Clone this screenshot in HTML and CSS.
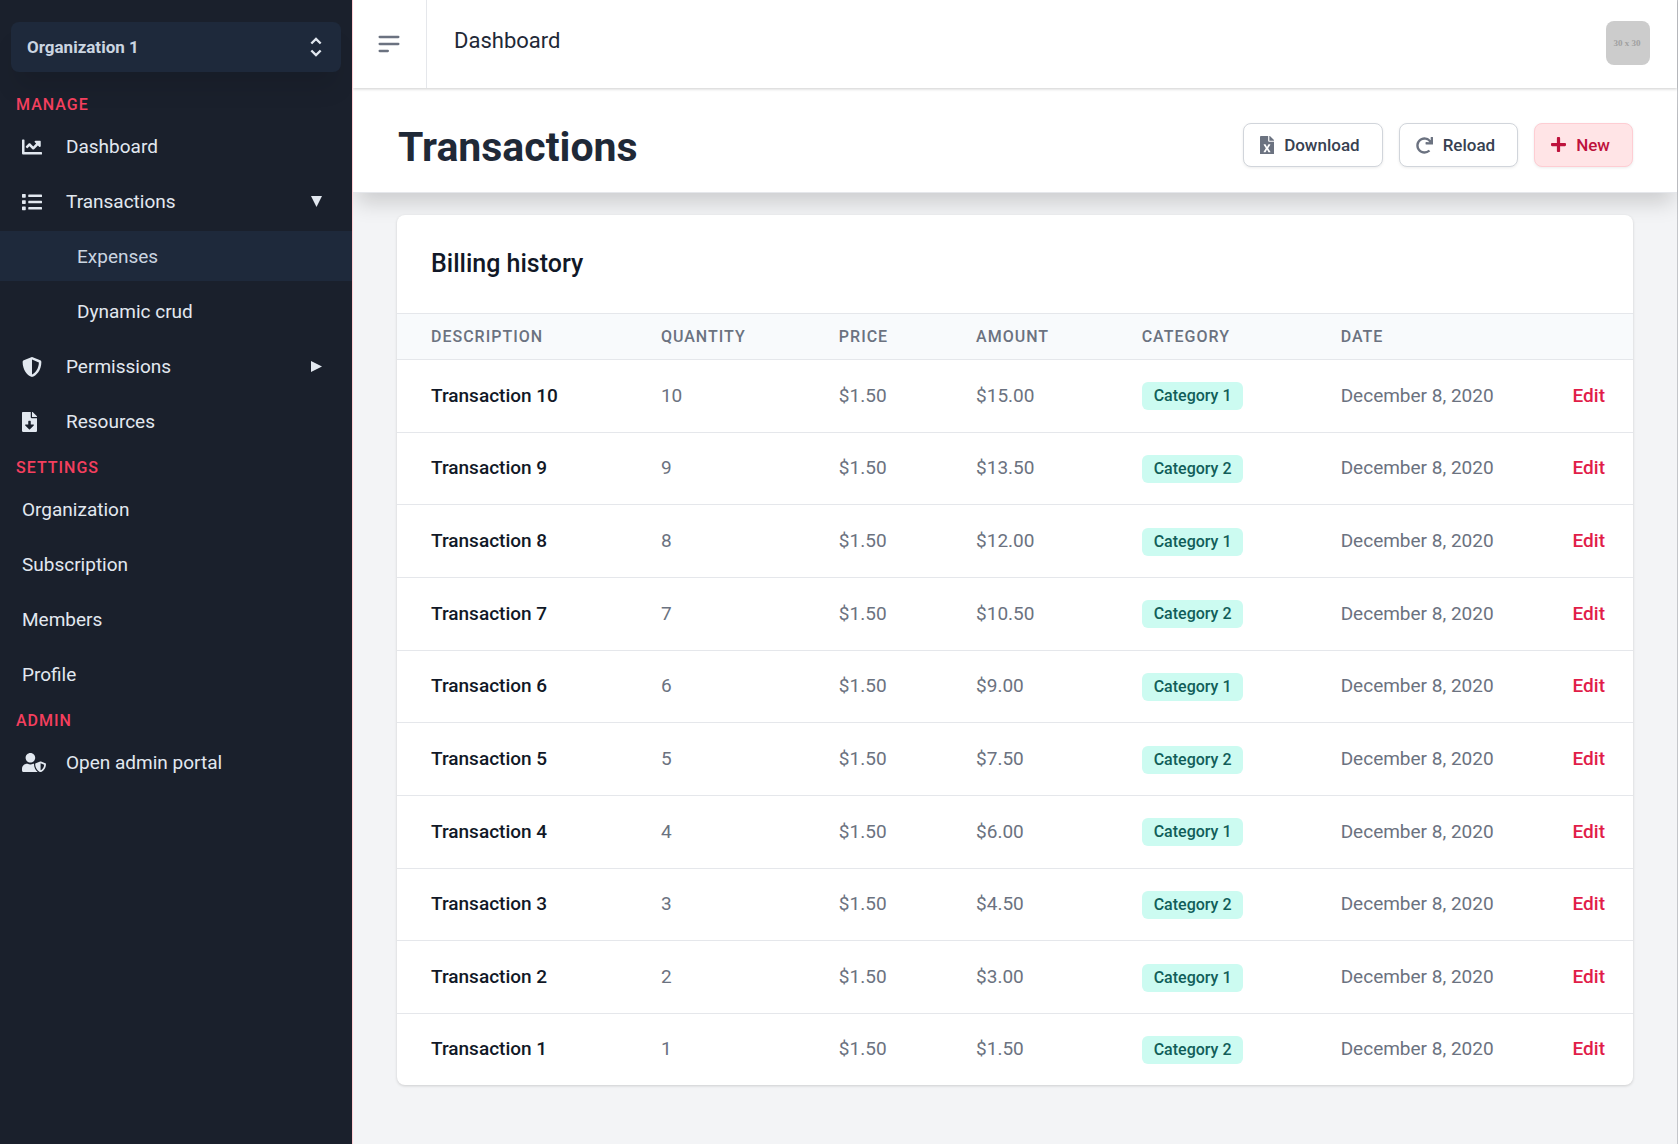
FILE: index.html
```html
<!DOCTYPE html>
<html lang="en">
<head>
<meta charset="utf-8">
<meta name="viewport" content="width=device-width, initial-scale=1">
<title>Transactions</title>
<link rel="stylesheet" href="styles.css">
</head>
<body>
<div class="app">
  <aside class="sidebar">
    <button class="org-switch" type="button">
      <span>Organization 1</span>
      <svg class="icon-selector" viewBox="0 0 24 24" aria-hidden="true"><path d="M8 9l4-4 4 4m0 6l-4 4-4-4"/></svg>
    </button>
    <nav>
      <h2 class="nav-heading">Manage</h2>
      <ul class="nav-list">
        <li><a class="nav-link" href="#">
          <span class="nav-icon"><svg class="w20" viewBox="0 0 512 512" aria-hidden="true"><path d="M496 384H64V80c0-8.84-7.16-16-16-16H16C7.16 64 0 71.16 0 80v336c0 17.67 14.33 32 32 32h464c8.84 0 16-7.16 16-16v-32c0-8.84-7.16-16-16-16zM464 96H345.94c-21.38 0-32.09 25.85-16.97 40.97l32.4 32.4L288 242.75l-73.37-73.37c-12.5-12.5-32.76-12.5-45.25 0l-68.69 68.69c-6.25 6.25-6.25 16.38 0 22.63l22.62 22.62c6.25 6.25 16.38 6.25 22.63 0L192 237.25l73.37 73.37c12.5 12.5 32.76 12.5 45.25 0l96-96 32.4 32.4c15.12 15.12 40.97 4.41 40.97-16.97V112c.01-8.84-7.15-16-15.99-16z"/></svg></span>
          <span>Dashboard</span></a></li>
        <li><a class="nav-link" href="#">
          <span class="nav-icon"><svg class="w20" viewBox="0 0 512 512" aria-hidden="true"><path d="M80 368H16a16 16 0 0 0-16 16v64a16 16 0 0 0 16 16h64a16 16 0 0 0 16-16v-64a16 16 0 0 0-16-16zm0-320H16A16 16 0 0 0 0 64v64a16 16 0 0 0 16 16h64a16 16 0 0 0 16-16V64a16 16 0 0 0-16-16zm0 160H16a16 16 0 0 0-16 16v64a16 16 0 0 0 16 16h64a16 16 0 0 0 16-16v-64a16 16 0 0 0-16-16zm416 176H176a16 16 0 0 0-16 16v32a16 16 0 0 0 16 16h320a16 16 0 0 0 16-16v-32a16 16 0 0 0-16-16zm0-320H176a16 16 0 0 0-16 16v32a16 16 0 0 0 16 16h320a16 16 0 0 0 16-16V80a16 16 0 0 0-16-16zm0 160H176a16 16 0 0 0-16 16v32a16 16 0 0 0 16 16h320a16 16 0 0 0 16-16v-32a16 16 0 0 0-16-16z"/></svg></span>
          <span>Transactions</span>
          <svg class="caret" viewBox="0 0 11 11" aria-hidden="true"><path d="M0 0h11L5.500 11z"/></svg></a></li>
        <li><a class="nav-link nav-sub nav-active" href="#" aria-current="page">Expenses</a></li>
        <li><a class="nav-link nav-sub" href="#">Dynamic crud</a></li>
        <li><a class="nav-link" href="#">
          <span class="nav-icon"><svg class="w20" viewBox="0 0 512 512" aria-hidden="true"><path d="M466.500 83.700l-192-80a48.150 48.150 0 0 0-36.900 0l-192 80C27.700 91.100 16 108.600 16 128c0 198.500 114.500 335.700 221.500 380.300 11.800 4.900 25.100 4.900 36.900 0C360.100 472.600 496 349.300 496 128c0-19.400-11.700-36.900-29.500-44.300zM256.100 446.300l-.1-381 175.900 73.300c-3.300 151.400-82.100 261.100-175.800 307.700z"/></svg></span>
          <span>Permissions</span>
          <svg class="caret" viewBox="0 0 11 11" aria-hidden="true"><path d="M0 0v11L11 5.500z"/></svg></a></li>
        <li><a class="nav-link" href="#">
          <span class="nav-icon"><svg class="w15" viewBox="0 0 384 512" aria-hidden="true"><path d="M224 136V0H24C10.700 0 0 10.700 0 24v464c0 13.300 10.700 24 24 24h336c13.300 0 24-10.700 24-24V160H248c-13.200 0-24-10.800-24-24zm76.450 211.360l-96.420 95.700c-6.650 6.610-17.390 6.610-24.040 0l-96.420-95.700C73.420 337.290 80.540 320 94.820 320H160v-80c0-8.840 7.160-16 16-16h32c8.840 0 16 7.160 16 16v80h65.180c14.280 0 21.400 17.290 11.270 27.360zM377 105L279.100 7c-4.500-4.500-10.600-7-17-7H256v128h128v-6.100c0-6.300-2.500-12.400-7-16.900z"/></svg></span>
          <span>Resources</span></a></li>
      </ul>
      <h2 class="nav-heading">Settings</h2>
      <ul class="nav-list">
        <li><a class="nav-link" href="#">Organization</a></li>
        <li><a class="nav-link" href="#">Subscription</a></li>
        <li><a class="nav-link" href="#">Members</a></li>
        <li><a class="nav-link" href="#">Profile</a></li>
      </ul>
      <h2 class="nav-heading">Admin</h2>
      <ul class="nav-list">
        <li><a class="nav-link" href="#">
          <span class="nav-icon"><svg class="w24" viewBox="0 0 640 512" aria-hidden="true"><path d="M622.300 271.100l-115.200-45c-4.100-1.600-12.600-3.700-22.200 0l-115.200 45c-10.700 4.200-17.700 14-17.700 24.900 0 111.600 68.700 188.800 132.900 213.900 9.600 3.700 18 1.600 22.200 0C558.400 489.900 640 420.500 640 296c0-10.900-7-20.700-17.700-24.900zM496 462.400V273.300l95.500 37.300c-5.600 87.100-60.900 135.400-95.500 151.800zM224 256c70.700 0 128-57.300 128-128S294.700 0 224 0 96 57.300 96 128s57.300 128 128 128zm96 40c0-2.500.8-4.800 1.100-7.200-2.500-.1-4.900-.8-7.500-.8h-16.700c-22.200 10.200-46.900 16-72.900 16s-50.600-5.800-72.900-16h-16.700C60.200 288 0 348.200 0 422.400V464c0 26.500 21.500 48 48 48h352c6.800 0 13.300-1.500 19.200-4-54-42.900-99.200-116.700-99.200-212z"/></svg></span>
          <span>Open admin portal</span></a></li>
      </ul>
    </nav>
  </aside>

  <div class="main">
    <header class="topbar">
      <button class="menu-button" type="button" aria-label="Toggle sidebar">
        <svg viewBox="0 0 24 24" aria-hidden="true"><path d="M4 6h16M4 12h16M4 18h7"/></svg>
      </button>
      <span class="topbar-title">Dashboard</span>
      <button class="avatar" type="button">30 x 30</button>
    </header>

    <section class="page-header">
      <h1>Transactions</h1>
      <div class="actions">
        <button class="btn" type="button">
          <svg class="icon-file" viewBox="0 0 384 512" aria-hidden="true"><path d="M224 136V0H24C10.700 0 0 10.700 0 24v464c0 13.300 10.700 24 24 24h336c13.300 0 24-10.700 24-24V160H248c-13.200 0-24-10.800-24-24zm60.100 106.500L224 336l60.100 93.500c5.100 8-.6 18.500-10.100 18.500h-34.900c-4.400 0-8.500-2.400-10.600-6.300C208.900 405.500 192 373 192 373c-6.400 14.800-10 20-36.600 68.800-2.100 3.900-6.100 6.300-10.500 6.300H110c-9.500 0-15.200-10.500-10.100-18.500l60.300-93.500-60.300-93.500c-5.200-8 .6-18.500 10.100-18.500h34.800c4.400 0 8.500 2.400 10.600 6.300 26.100 48.800 20 33.600 36.600 68.500 0 0 6.100-11.700 36.600-68.500 2.100-3.900 6.200-6.300 10.600-6.300H274c9.500-.1 15.200 10.400 10.100 18.400zM384 121.900v6.100H256V0h6.100c6.400 0 12.500 2.500 17 7l97.900 98c4.500 4.500 7 10.600 7 16.900z"/></svg>
          Download
        </button>
        <button class="btn" type="button">
          <svg class="icon-reload" viewBox="0 0 512 512" aria-hidden="true"><path d="M500.330 0h-47.410a12 12 0 0 0-12 12.570l4 82.760A247.420 247.420 0 0 0 256 8C119.340 8 7.900 119.530 8 256.190 8.100 393.070 119.100 504 256 504a247.100 247.100 0 0 0 166.180-63.910 12 12 0 0 0 .48-17.430l-34-34a12 12 0 0 0-16.380-.55A176 176 0 1 1 402.100 157.800l-101.530-4.870a12 12 0 0 0-12.570 12v47.410a12 12 0 0 0 12 12h200.330a12 12 0 0 0 12-12V12a12 12 0 0 0-12-12z"/></svg>
          Reload
        </button>
        <button class="btn btn-new" type="button">
          <svg class="icon-plus" viewBox="0 0 448 512" aria-hidden="true"><path d="M416 208H272V64c0-17.670-14.330-32-32-32h-32c-17.670 0-32 14.330-32 32v144H32c-17.670 0-32 14.330-32 32v32c0 17.670 14.330 32 32 32h144v144c0 17.670 14.330 32 32 32h32c17.670 0 32-14.330 32-32V304h144c17.670 0 32-14.330 32-32v-32c0-17.670-14.330-32-32-32z"/></svg>
          New
        </button>
      </div>
    </section>

    <main class="content">
      <section class="card">
        <h2 class="card-title">Billing history</h2>
        <table class="table">
          <colgroup>
            <col class="col-description"><col class="col-quantity"><col class="col-price"><col class="col-amount"><col class="col-category"><col class="col-date"><col>
          </colgroup>
          <thead>
            <tr><th scope="col">Description</th><th scope="col">Quantity</th><th scope="col">Price</th><th scope="col">Amount</th><th scope="col">Category</th><th scope="col">Date</th><td></td></tr>
          </thead>
          <tbody>
            <tr><td class="name">Transaction 10</td><td>10</td><td>$1.50</td><td>$15.00</td><td><span class="badge">Category 1</span></td><td>December 8, 2020</td><td class="action"><a href="#">Edit</a></td></tr>
            <tr><td class="name">Transaction 9</td><td>9</td><td>$1.50</td><td>$13.50</td><td><span class="badge">Category 2</span></td><td>December 8, 2020</td><td class="action"><a href="#">Edit</a></td></tr>
            <tr><td class="name">Transaction 8</td><td>8</td><td>$1.50</td><td>$12.00</td><td><span class="badge">Category 1</span></td><td>December 8, 2020</td><td class="action"><a href="#">Edit</a></td></tr>
            <tr><td class="name">Transaction 7</td><td>7</td><td>$1.50</td><td>$10.50</td><td><span class="badge">Category 2</span></td><td>December 8, 2020</td><td class="action"><a href="#">Edit</a></td></tr>
            <tr><td class="name">Transaction 6</td><td>6</td><td>$1.50</td><td>$9.00</td><td><span class="badge">Category 1</span></td><td>December 8, 2020</td><td class="action"><a href="#">Edit</a></td></tr>
            <tr><td class="name">Transaction 5</td><td>5</td><td>$1.50</td><td>$7.50</td><td><span class="badge">Category 2</span></td><td>December 8, 2020</td><td class="action"><a href="#">Edit</a></td></tr>
            <tr><td class="name">Transaction 4</td><td>4</td><td>$1.50</td><td>$6.00</td><td><span class="badge">Category 1</span></td><td>December 8, 2020</td><td class="action"><a href="#">Edit</a></td></tr>
            <tr><td class="name">Transaction 3</td><td>3</td><td>$1.50</td><td>$4.50</td><td><span class="badge">Category 2</span></td><td>December 8, 2020</td><td class="action"><a href="#">Edit</a></td></tr>
            <tr><td class="name">Transaction 2</td><td>2</td><td>$1.50</td><td>$3.00</td><td><span class="badge">Category 1</span></td><td>December 8, 2020</td><td class="action"><a href="#">Edit</a></td></tr>
            <tr><td class="name">Transaction 1</td><td>1</td><td>$1.50</td><td>$1.50</td><td><span class="badge">Category 2</span></td><td>December 8, 2020</td><td class="action"><a href="#">Edit</a></td></tr>
          </tbody>
        </table>
      </section>
    </main>
  </div>
</div>
</body>
</html>
```
FILE: styles.css
```css
*,
*::before,
*::after {
  box-sizing: border-box;
}

body {
  margin: 0;
  font-family: Roboto, "Liberation Sans", sans-serif;
  font-size: 19px;
  line-height: 28px;
  color: #6b7280;
  background: #f3f4f6;
}

h1,
h2,
ul {
  margin: 0;
  padding: 0;
}

ul {
  list-style: none;
}

a {
  color: inherit;
  text-decoration: none;
}

button {
  font-family: inherit;
  cursor: pointer;
}

svg {
  display: block;
  flex: none;
  fill: currentColor;
}

.app {
  display: flex;
  min-height: 100vh;
}

/* Sidebar */
.sidebar {
  position: relative;
  z-index: 1;
  flex: none;
  width: 353px;
  padding-top: 22px;
  background: #1a202c;
  border-right: 1px solid #fecdd3;
  color: #e2e8f0;
}

.org-switch {
  display: flex;
  align-items: center;
  justify-content: space-between;
  width: calc(100% - 22px);
  height: 50px;
  margin: 0 11px 11px;
  padding: 0 11px 0 16px;
  border: 0;
  border-radius: 8px;
  background: #1e293b;
  color: #cbd5e1;
  font-size: 17px;
  font-weight: 700;
  box-shadow: 0 20px 25px -5px rgba(0, 0, 0, 0.1);
}

.icon-selector {
  width: 28px;
  height: 28px;
  fill: none;
  stroke: #e2e8f0;
  stroke-width: 2;
}

.nav-heading {
  padding: 10px 16px 4px;
  font-size: 16px;
  font-weight: 500;
  line-height: 24px;
  letter-spacing: 1px;
  text-transform: uppercase;
  color: #f43f5e;
}

.nav-list {
  display: flex;
  flex-direction: column;
  gap: 5px;
}

.nav-link {
  display: flex;
  align-items: center;
  height: 50px;
  padding: 1px 30px 0 22px;
}

.nav-sub {
  padding-left: 77px;
}

.nav-active {
  background: #1e293b;
  color: #cbd5e1;
}

.nav-icon {
  width: 44px;
}

.w15 {
  width: 15px;
}

.w20 {
  width: 20px;
}

.w24 {
  width: 24px;
}

.caret {
  width: 11px;
  margin-left: auto;
}

/* Main column */
.main {
  flex: 1;
  min-width: 0;
  border-right: 1px solid #c4c6ca;
}

.topbar {
  position: relative;
  display: flex;
  height: 88px;
  padding-right: 27px;
  background: #fff;
  box-shadow: 0 1px 3px rgba(0, 0, 0, 0.2);
}

.menu-button {
  padding: 0 23px 0 22px;
  border: 0;
  border-right: 1px solid #e5e7eb;
  background: none;
  color: #6b7280;
}

.menu-button svg {
  width: 28px;
  fill: none;
  stroke: currentColor;
  stroke-width: 2;
  stroke-linecap: round;
}

.topbar-title {
  padding: 27px 27px 0;
  font-size: 22px;
  color: #1f2937;
}

.avatar {
  width: 44px;
  height: 44px;
  margin: 21px 0 0 auto;
  padding: 0 2px 0 0;
  border: 0;
  border-radius: 8px;
  background: #ccc;
  color: #a0a0a0;
  font-family: "Liberation Serif", serif;
  font-size: 9px;
  font-weight: 700;
}

.page-header {
  display: flex;
  justify-content: space-between;
  align-items: flex-start;
  height: 105px;
  padding: 35px 44px 0 45px;
  background: #fff;
  border-bottom: 1px solid #e5e7eb;
  box-shadow: 0 14px 20px -4px rgba(0, 0, 0, 0.16);
}

h1 {
  font-size: 41px;
  font-weight: 700;
  line-height: 48px;
  color: #1f2937;
}

.actions {
  display: flex;
  gap: 16px;
}

.btn {
  display: flex;
  align-items: center;
  gap: 10px;
  height: 44px;
  padding: 0 22px 0 16px;
  border: 1px solid #d1d5db;
  border-radius: 8px;
  background: #fff;
  color: #374151;
  font-size: 17px;
  font-weight: 500;
  box-shadow: 0 1px 3px rgba(0, 0, 0, 0.08);
}

.btn svg {
  color: #6b7280;
}

.icon-file {
  width: 14px;
}

.icon-reload {
  width: 17px;
}

.icon-plus {
  width: 15px;
}

.btn-new,
.btn-new svg {
  color: #be123c;
}

.btn-new {
  background: #ffe4e6;
  border-color: #fecdd3;
}

.content {
  position: relative;
  padding: 22px 44px 58px;
}

.card {
  overflow: hidden;
  background: #fff;
  border-radius: 8px;
  box-shadow: 0 1px 3px rgba(0, 0, 0, 0.16);
}

.card-title {
  padding: 32px 34px;
  font-size: 25px;
  font-weight: 500;
  line-height: 34px;
  color: #111827;
}

.table {
  width: 100%;
  height: 772px;
  table-layout: fixed;
  border-collapse: collapse;
}

.col-description {
  width: 18.6%;
}

.col-quantity {
  width: 14.4%;
}

.col-price {
  width: 11.1%;
}

.col-amount {
  width: 13.4%;
}

.col-category {
  width: 16.1%;
}

.col-date {
  width: 16.4%;
}

thead tr {
  height: 46px;
  background: #f8fafc;
}

th {
  padding: 0 0 0 34px;
  font-size: 16px;
  font-weight: 500;
  letter-spacing: 1px;
  text-align: left;
  text-transform: uppercase;
}

tr {
  border-top: 1px solid #e5e7eb;
}

tbody td {
  padding: 0 0 0 34px;
  white-space: nowrap;
}

tbody .name {
  font-weight: 500;
  color: #111827;
}

tbody .action {
  padding: 0 28px 0 0;
  text-align: right;
  font-weight: 500;
  color: #e11d48;
}

.badge {
  display: inline-block;
  padding: 0 12px;
  border-radius: 6px;
  background: #ccfbf1;
  color: #115e59;
  font-size: 16px;
  font-weight: 500;
}
```
